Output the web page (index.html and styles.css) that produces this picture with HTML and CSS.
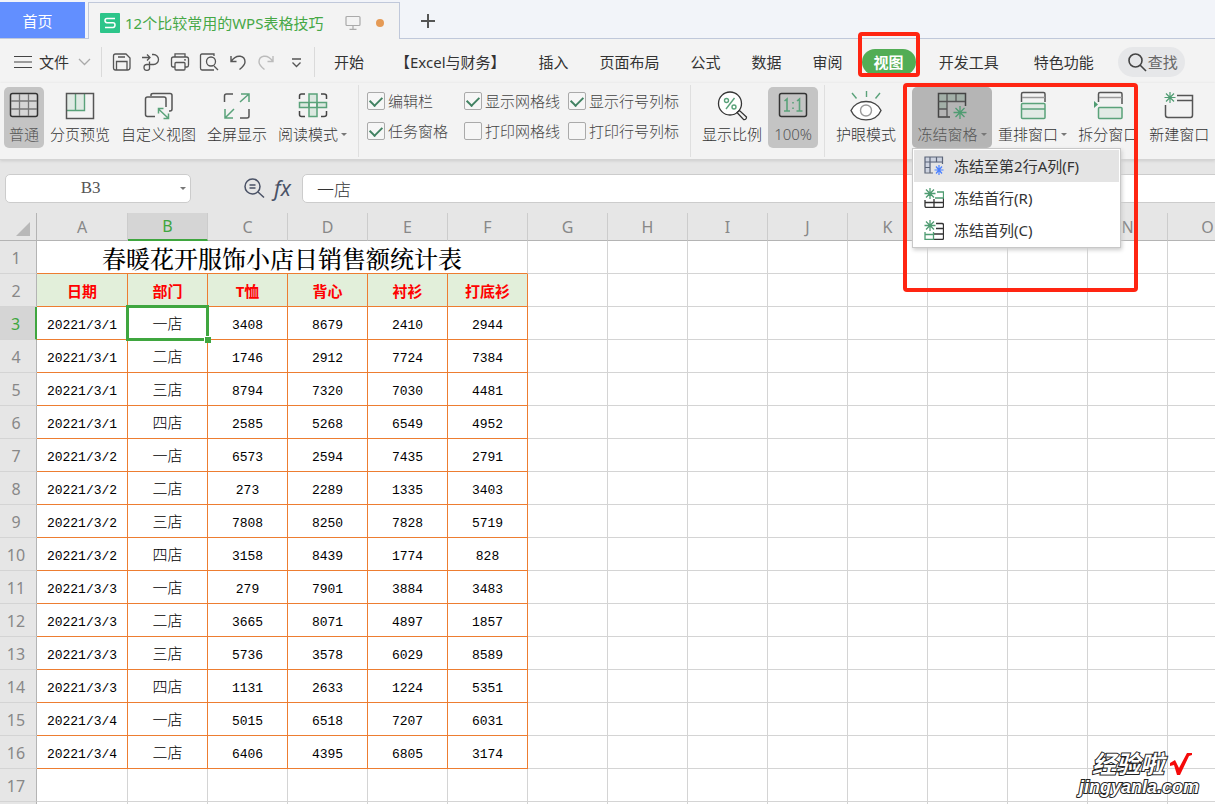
FILE: index.html
```html
<!DOCTYPE html>
<html lang="zh-CN">
<head>
<meta charset="utf-8">
<title>12个比较常用的WPS表格技巧</title>
<link rel="stylesheet" href="styles.css">
</head>
<body>
<div class="app">
  <header class="tabbar">
    <button class="home-tab">首页</button>
    <div class="doc-tab">
      <svg class="doc-logo" width="20" height="20" viewBox="0 0 20 20"><rect width="20" height="20" rx="1" fill="#2dc58a"/><path d="M15 5.5H7Q5 5.500 5 7.500T7 9.800H13Q15 9.800 15 12T13 14.500H5" fill="none" stroke="#fff" stroke-width="1.500"/></svg>
      <span class="doc-name">12个比较常用的WPS表格技巧</span>
      <svg width="16" height="16" viewBox="0 0 16 16" fill="none" stroke="#aaa" stroke-width="1.200"><rect x="1" y="1.500" width="14" height="9" rx="1"/><path d="M8 10.500V14M4.500 14.300H11.500"/></svg>
      <span class="unsaved"></span>
    </div>
    <button class="new-tab" aria-label="新建标签"><svg width="16" height="16" viewBox="0 0 16 16" stroke="#555" stroke-width="2"><path d="M8 1V15M1 8H15"/></svg></button>
  </header>

  <nav class="menubar">
    <button class="file-btn"><svg width="18" height="14" viewBox="0 0 18 14" stroke="#444" stroke-width="1.200"><path d="M0 1.500H18M0 7H18M0 12.500H18"/></svg>文件<svg width="13" height="8" viewBox="0 0 13 8" fill="none" stroke="#aaa" stroke-width="1.300"><path d="M1 1L6.500 6.500L12 1"/></svg></button>
    <span class="bar-rule"></span>
    <div class="quick">
      <button aria-label="保存"><svg width="20" height="20" viewBox="0 0 20 20" fill="none" stroke="#555" stroke-width="1.300"><path d="M3.500 2H14L18 6V15.500Q18 18 15.500 18H3.500Q1.500 18 1.500 16V4Q1.500 2 3.500 2Z"/><path d="M4.500 18V9.500H15V18M6 5H13"/></svg></button>
      <button aria-label="输出为PDF"><svg width="20" height="20" viewBox="0 0 20 20" fill="none" stroke="#555" stroke-width="1.300"><path d="M1 5.500H9M6 2.500L9 5.500L6 8.500M11 2.500H12.500A5 5 0 0 1 12.500 12.500H6Q3 12.500 3 15.500T6 18.300T8.500 15.500V9.500"/></svg></button>
      <button aria-label="打印"><svg width="20" height="20" viewBox="0 0 20 20" fill="none" stroke="#555" stroke-width="1.300"><path d="M5 5V1.800H15V5M5 15H3Q1.500 15 1.500 13V7Q1.500 5 3.500 5H16.500Q18.500 5 18.500 7V13Q18.500 15 17 15H15M14 7.800H16"/><rect x="5" y="10.500" width="10" height="7.500" rx="1"/></svg></button>
      <button aria-label="打印预览"><svg width="20" height="20" viewBox="0 0 20 20" fill="none" stroke="#555" stroke-width="1.300"><path d="M15 4V2H3Q1.500 2 1.500 3.500V16Q1.500 18 3 18H15M15 14L19 18"/><circle cx="12" cy="9.500" r="4.500"/></svg></button>
      <button aria-label="撤销"><svg width="20" height="20" viewBox="0 0 20 20" fill="none" stroke="#555" stroke-width="1.400"><path d="M3 4V9.500H8.500M3 9.500C9 1 17 4 17 10Q17 13 11.500 17.500"/></svg></button>
      <button aria-label="恢复"><svg width="20" height="20" viewBox="0 0 20 20" fill="none" stroke="#bbb" stroke-width="1.400"><path d="M16 4V9.500H10.500M16 9.500C10 1 2 4 2 10Q2 13 7.500 17.500"/></svg></button>
      <button aria-label="更多"><svg width="20" height="20" viewBox="0 0 20 20" fill="none" stroke="#555" stroke-width="1.300"><path d="M6 7H15M6.500 10.500L10.500 14.500L14.500 10.500"/></svg></button>
    </div>
    <span class="bar-rule"></span>
    <div class="menus">
      <button>开始</button>
      <button>【Excel与财务】</button>
      <button>插入</button>
      <button>页面布局</button>
      <button>公式</button>
      <button>数据</button>
      <button>审阅</button>
      <button class="active">视图</button>
      <button class="wide">开发工具</button>
      <button class="wide">特色功能</button>
    </div>
    <button class="search"><svg width="20" height="20" viewBox="0 0 20 20" fill="none" stroke="#444" stroke-width="1.600"><circle cx="8.500" cy="8.500" r="6.500"/><path d="M13 13L19 19"/></svg>查找</button>
  </nav>

  <section class="ribbon">
    <button class="tool on"><svg width="32" height="32" viewBox="0 0 32 32" fill="none"><rect x="2.500" y="4.500" width="27" height="23" rx="2" fill="#d6d6d6" stroke="#333" stroke-width="1.500"/><path d="M11.500 5V27M20.500 5V27M3 12H29M3 20H29" stroke="#777" stroke-width="1.300"/></svg>普通</button>
    <button class="tool"><svg width="32" height="32" viewBox="0 0 32 32" fill="none"><path d="M3 5H20V21H3Z" fill="#e0eae4"/><path d="M20.500 5V21.500H3M11.500 5V21" stroke="#5aa27a" stroke-width="1.400"/><rect x="2.500" y="4.500" width="27" height="25" stroke="#555" stroke-width="1.500"/></svg>分页预览</button>
    <button class="tool"><svg width="32" height="32" viewBox="0 0 32 32" fill="none" stroke="#555" stroke-width="1.500"><path d="M8 7V6Q8 4.500 10 4.500H27Q29 4.500 29 6.500V20Q29 22 27 22H26M12 27.500H4.500Q2.500 27.500 2.500 25.500V10Q2.500 8 4.500 8H21Q23 8 23 10V18"/><path d="M15.500 20L25.500 29.500M15.500 24.500V19.500H20.500M25.500 24.500V29.500H20.500" stroke="#5aa27a"/></svg>自定义视图</button>
    <button class="tool"><svg width="32" height="32" viewBox="0 0 32 32" fill="none" stroke="#555" stroke-width="1.500"><path d="M3.500 13V7Q3.500 5 5.500 5H12M28 20V27Q28 29 26 29H19"/><path d="M19 13L28 5M20 5H28V13M13 20L4 29M4 20V29H12" stroke="#5aa27a"/></svg>全屏显示</button>
    <button class="tool"><svg width="32" height="32" viewBox="0 0 32 32" fill="none" stroke="#444" stroke-width="1.500"><path d="M2.500 10V7Q2.500 5 4.500 5H8M24 5H27Q29.500 5 29.500 7V10M2.500 22V25.500Q2.500 27.500 4.500 27.500H8M24 27.500H27Q29.500 27.500 29.500 25.500V22"/><path d="M12 5V27.500H20V5ZM2.500 13.500H29.500V18.500H2.500Z" fill="#dbe8e0" stroke="#5aa27a"/><path d="M12 14V18M20 14V18" stroke="#5aa27a"/></svg><span class="with-arrow">阅读模式</span></button>
    <span class="group-rule"></span>
    <div class="checks">
      <label><input type="checkbox" checked>编辑栏</label>
      <label><input type="checkbox" checked>显示网格线</label>
      <label><input type="checkbox" checked>显示行号列标</label>
      <label><input type="checkbox" checked>任务窗格</label>
      <label><input type="checkbox">打印网格线</label>
      <label><input type="checkbox">打印行号列标</label>
    </div>
    <span class="group-rule"></span>
    <button class="tool"><svg width="32" height="32" viewBox="0 0 32 32" fill="none" stroke="#333" stroke-width="1.300"><circle cx="14" cy="14.500" r="11.500" fill="#fff"/><path d="M21 23.500L23.500 21.500L30.500 28Q30.500 31 27.500 30.500Z"/><g stroke="#5aa27a" stroke-width="1.400"><path d="M18.500 9L10 20"/><circle cx="10.500" cy="11.500" r="2"/><circle cx="18" cy="18" r="2"/></g></svg>显示比例</button>
    <button class="tool on ratio"><svg width="32" height="32" viewBox="0 0 32 32" fill="none"><rect x="2.500" y="4.500" width="27" height="23" rx="2" stroke="#333" stroke-width="1.500"/><path d="M7.500 12L10 10V22M7 22H13M20 12L22.500 10V22M19.500 22H25.500M16 13V14.500M16 18.500V20" stroke="#5aa27a" stroke-width="1.600"/></svg>100%</button>
    <span class="group-rule"></span>
    <button class="tool"><svg width="32" height="32" viewBox="0 0 32 32" fill="none" stroke="#444" stroke-width="1.400"><path d="M1 21.500C6 9.500 26 9.500 31 21.500C26 34 6 34 1 21.500Z" fill="#fff"/><circle cx="16" cy="21.500" r="5.500" stroke="#999"/><path d="M2 4L6.500 9.500M16.500 2V8M30 4L25.500 9.500" stroke="#5aa27a"/></svg>护眼模式</button>
    <span class="group-rule tight"></span>
    <div class="freeze">
      <button class="tool open"><svg width="32" height="32" viewBox="0 0 32 32" fill="none" stroke="#555" stroke-width="1.300"><path d="M3 5H29V12H11V20H3Z" fill="#a3b0a8" stroke="none"/><path d="M14 28H2.500V4.500H29.500V17" stroke="#444" stroke-width="1.500"/><path d="M11 5V28M20 5V12.500M2.500 12.500H29M2.500 20H11"/><path d="M24 17V30M17.500 23.500H30.500M19.500 19L28.500 28M28.500 19L19.500 28" stroke="#4f9c72"/></svg><span class="with-arrow">冻结窗格</span></button>
      <div class="dropdown" role="menu">
        <button class="hover" role="menuitem"><svg width="20" height="20" viewBox="0 0 20 20" fill="none" stroke="#5b6478" stroke-width="1.200"><path d="M1 1H18V7H7V16H1Z" fill="#cdd3e0" stroke="none"/><path d="M9 17H1V1H18.500V8M6 1V17M12.500 1V6M1 6H18M1 11.500H6"/><path d="M15 9V19M10.500 14H19.500M12 10.500L18 17.500M18 10.500L12 17.500" stroke="#4a80ff"/></svg>冻结至第2行A列(F)</button>
        <button role="menuitem"><svg width="20" height="20" viewBox="0 0 20 20" fill="none" stroke="#333" stroke-width="1.300"><path d="M1 12V18Q1 19.500 2.500 19.500H17.500Q19.500 19.500 19.500 18V10M1 14.500H19M10 11V19"/><path d="M6 0V11M.5 5.500H11.500M2 1.500L10 9.500M10 1.500L2 9.500M13 4H19.500V10H11" stroke="#4f9c72"/></svg>冻结首行(R)</button>
        <button role="menuitem"><svg width="20" height="20" viewBox="0 0 20 20" fill="none" stroke="#333" stroke-width="1.300"><path d="M12 3.500H18Q19.500 3.500 19.500 5V18Q19.500 19.500 18 19.500H10M12 8.500H19M10 14H19"/><path d="M6 0V11M.5 5.500H11.500M2 1.500L10 9.500M10 1.500L2 9.500M1 12V19.500H9.500V12M1 14.500H9.500" stroke="#4f9c72"/></svg>冻结首列(C)</button>
      </div>
    </div>
    <button class="tool"><svg width="32" height="32" viewBox="0 0 32 32" fill="none" stroke="#555" stroke-width="1.500"><path d="M4.500 13V5Q4.500 3.500 6 3.500H26.500Q28 3.500 28 5V13"/><path d="M5 8.500H28" stroke="#999"/><rect x="4.500" y="14.500" width="23.500" height="15" rx="1" fill="#e2ebe5" stroke="#5aa27a"/><path d="M5 20H28" stroke="#5aa27a"/></svg><span class="with-arrow">重排窗口</span></button>
    <button class="tool"><svg width="32" height="32" viewBox="0 0 32 32" fill="none" stroke="#555" stroke-width="1.500"><path d="M6.500 13V5Q6.500 3.500 8 3.500H28.500Q30 3.500 30 5V15"/><path d="M7 8.500H30" stroke="#999"/><rect x="6.500" y="18.500" width="23.500" height="11" rx="1" fill="#e2ebe5" stroke="#5aa27a"/><path d="M2 12V19L6 15.500Z" fill="#4f9c72" stroke="none"/></svg>拆分窗口</button>
    <button class="tool"><svg width="32" height="32" viewBox="0 0 32 32" fill="none" stroke="#555" stroke-width="1.500"><path d="M14 6.500H29.500V26Q29.500 28.500 27.500 28.500H5Q2.500 28.500 2.500 26V16M14 11.500H29"/><path d="M7 3V14M1.500 8.500H12.500M3 4.500L11 12.500M11 4.500L3 12.500" stroke="#4f9c72" stroke-width="1.200"/></svg>新建窗口</button>
    <span class="callout callout-tools"></span>
  </section>

  <section class="formula-bar">
    <div class="name-box"><input aria-label="名称框" value="B3"><button aria-label="展开名称"></button></div>
    <div class="fx-tools">
      <button aria-label="查找函数"><svg width="22" height="22" viewBox="0 0 22 22" fill="none" stroke="#4a5266" stroke-width="1.500"><circle cx="9.500" cy="9.500" r="7.500"/><path d="M15 15L21 20.500M6.500 8H12.500M6.500 11H12.500"/></svg></button>
      <button class="fx" aria-label="插入函数">fx</button>
    </div>
    <input class="formula" aria-label="编辑栏" value="一店">
  </section>

  <main class="sheet"><table id="grid"></table></main>

  <div class="watermark"><div class="mark-top">经验啦<svg width="26" height="26" viewBox="0 0 26 26"><path d="M2 12L7 9L11 17L19 2H24V4L21 5L12 24H9L6 14L2 15Z" fill="#f50a0a"/></svg></div><div class="mark-site">jingyanla.com</div></div>
</div>
<script src="grid.js"></script>
</body>
</html>
```
FILE: styles.css
```css
* { box-sizing: border-box; }
body {
  margin: 0;
  font-family: "Noto Sans", "Noto Sans CJK SC", sans-serif;
  font-weight: 300;
  font-size: 15px;
  line-height: 20px;
  color: #333;
  background: #fff;
}
button, input { font: inherit; color: inherit; }
button { border: 0; padding: 0; background: none; white-space: nowrap; }
svg { display: block; flex: none; }
.app { position: relative; height: 100vh; overflow: hidden; display: flex; flex-direction: column; }

.tabbar { flex: none; display: flex; height: 39px; padding-top: 2px; background: #f2f4f9; border-bottom: 1px solid #c0c8da; font-weight: 400; }
.home-tab { width: 85px; padding: 2px 10px 0 0; background: #628fff; color: #fff; }
.doc-tab {
  display: flex; align-items: center; width: 312px; margin: 0 0 -1px 3px; padding: 3px 11px 0;
  background: #f3f3f3; border: 1px solid #c0c8da; border-bottom: 0; color: #46a846;
}
.doc-name { flex: 1; min-width: 0; margin-left: 5px; white-space: nowrap; }
.unsaved { width: 8px; height: 8px; margin: 0 4px 0 15px; border-radius: 50%; background: #e59a55; }
.new-tab { margin-left: 20px; padding-top: 2px; }

.menubar { flex: none; display: flex; align-items: center; height: 44px; padding: 2px 0 0 14px; background: #f3f3f3; font-weight: 400; }
.file-btn { display: flex; align-items: center; gap: 7px; width: 87px; }
.bar-rule { width: 1px; height: 30px; background: #dadada; }
.file-btn svg:last-child { margin-left: 2px; }
.quick { display: flex; gap: 9px; width: 212px; padding-left: 10px; }
.menus { display: flex; align-items: center; gap: 7px; padding-left: 7px; }
.menus button { padding: 3px 12px; }
.menus button:nth-child(2) { margin-right: 2px; }
.menus .active { position: relative; background: #52ad55; color: #fff; font-weight: 700; border-radius: 14px; }
.menus .active::after { content: ""; position: absolute; inset: -17px -4px -2px; border: 4px solid #ff2512; border-radius: 4px; }
.menus .wide { margin-left: 4px; }
.search { display: flex; align-items: center; gap: 1px; margin-left: 12px; height: 30px; padding: 0 7px 0 9px; border-radius: 15px; background: #e6e7e9; color: #666; }

.ribbon { flex: none; position: relative; z-index: 2; display: flex; gap: 1px; height: 77px; padding: 4px 0 0 4px; background: #f3f3f3; border-bottom: 1px solid #d4d4d4; box-shadow: 0 1px 3px #ccc; }
.tool { flex: none; display: flex; flex-direction: column; align-items: center; gap: 3px; height: 61px; padding: 2px 5px 0; border-radius: 5px; color: #333; }
.tool svg { margin: 0 -1px; }
.tool.on { background: #c4c4c4; color: #555; }
.tool.open { width: 80px; background: #b5b5b5; color: #555; }
.tool.ratio { width: 50px; }
.with-arrow { display: flex; align-items: center; gap: 3px; }
.with-arrow::after, .name-box button::after { content: ""; border: 3px solid transparent; border-top-color: #777; border-bottom: 0; }
.group-rule { flex: none; width: 1px; height: 72px; margin: -2px 5px 0; background: #dfdfdf; }
.group-rule.tight { margin: -2px 4px 0; }
.checks { flex: none; display: grid; grid-template-columns: 97px 104px 114px; grid-auto-rows: 20px; row-gap: 10px; padding: 4px 0 0 2px; width: 319px; color: #444; }
.checks label { display: flex; align-items: center; gap: 3px; white-space: nowrap; }
.checks input { appearance: none; width: 18px; height: 18px; margin: 0; border: 1px solid #aaa; border-radius: 2px; background: #f6f6f6; display: grid; place-items: center; }
.checks input:checked::after { content: ""; width: 10px; height: 6px; margin-top: -3px; border: solid #418262; border-width: 0 0 2px 2px; transform: rotate(-45deg); }
.freeze { position: relative; flex: none; }
.dropdown { position: absolute; top: 61px; left: 0; width: 209px; padding: 1px; background: #fff; border: 1px solid #c8c8c8; box-shadow: 1px 2px 4px #ccc; font-weight: 400; }
.dropdown button { display: flex; align-items: center; gap: 10px; width: 100%; height: 32px; padding-left: 10px; }
.dropdown .hover { background: #e4e4e4; }
.callout { position: absolute; border: 4px solid #ff2512; border-radius: 4px; pointer-events: none; }
.callout-tools { left: 903px; top: 0; width: 235px; height: 209px; }

.formula-bar { flex: none; display: flex; align-items: center; height: 53px; padding: 3px 0 0 5px; background: #e6e6e6; }
.name-box { display: flex; width: 186px; height: 29px; border: 1px solid #ccc; border-radius: 5px; background: #fff; }
.name-box input { width: 100%; min-width: 0; padding: 0; border: 0; background: none; text-align: center; font-family: "Liberation Serif", serif; font-size: 17px; font-weight: 400; color: #555; }
.name-box button { width: 16px; display: grid; place-items: center; }
.fx-tools { display: flex; align-items: center; gap: 9px; width: 111px; padding-left: 52px; }
.fx { font-family: "Noto Sans", sans-serif; font-style: italic; font-size: 21px; color: #4a5266; font-weight: 400; }
.formula { flex: 1; min-width: 0; height: 29px; margin-right: -8px; padding: 0 14px; border: 1px solid #ccc; border-radius: 5px; background: #fff; font-size: 17px; }

.sheet { flex: 1; min-height: 0; overflow: hidden; background: #fff; }
table { table-layout: fixed; width: 1248px; border-collapse: separate; border-spacing: 0; }
th, td { height: 33px; padding: 0; border: solid #d4d4d4; border-width: 0 1px 1px 0; text-align: center; font-weight: 400; white-space: nowrap; line-height: 20px; }
col { width: 80px; }
.col-head { width: 37px; }
.col-date { width: 91px; }
thead th { height: 28px; background: #e6e6e6; border-color: #b4b4b4; color: #888; font-size: 16px; }
thead th:not(:first-child) { border-right-color: #ccc; }
thead .current { background: #d5d5d5; color: #3fa63f; border-bottom: 2px solid #3fa63f; }
.corner svg { margin: 4px 0 0 16px; }
tbody th { padding: 2px 4px 0 0; background: #e6e6e6; border-right-color: #b4b4b4; color: #888; font-size: 16px; }
tbody .current th { background: #d5d5d5; color: #3fa63f; border-right: 2px solid #3fa63f; }
.title { padding-top: 2px; border-bottom-color: #ed7d31; font-family: "Noto Serif CJK SC", "Noto Sans CJK SC", serif; font-weight: 500; font-size: 24px; line-height: 30px; color: #000; }
.label { padding-top: 2px; background: #e2efda; border-color: #ed7d31; color: #f00; font-weight: 700; }
.value { border-color: #ed7d31; padding-top: 5px; color: #000; font-family: "Liberation Mono", "Noto Sans CJK SC", monospace; font-size: 13px; }
.shop { font-size: 15px; font-weight: 300; }
.selected { position: relative; }
.selected::before { content: ""; position: absolute; inset: -2px; border: 3px solid #3fa63f; }
.selected::after { content: ""; position: absolute; right: -4px; bottom: -4px; width: 6px; height: 6px; background: #3fa63f; border: solid #fff; border-width: 1px 0 0 1px; }

.watermark { position: absolute; right: 16px; bottom: 7px; color: #fff; font-style: italic; font-weight: 700; -webkit-text-stroke: 2px #222; paint-order: stroke fill; }
.mark-top { display: flex; align-items: center; justify-content: flex-end; gap: 4px; padding-right: 5px; font-size: 24px; line-height: 24px; }
.mark-site { font-family: "Liberation Sans", sans-serif; font-size: 18px; line-height: 20px; }
```
FILE: grid.js
```js
const columns = "ABCDEFGHIJKLMNO".split("");
const labels = ["日期", "部门", "T恤", "背心", "衬衫", "打底衫"];
const sales = [
  ["20221/3/1", "一店", 3408, 8679, 2410, 2944],
  ["20221/3/1", "二店", 1746, 2912, 7724, 7384],
  ["20221/3/1", "三店", 8794, 7320, 7030, 4481],
  ["20221/3/1", "四店", 2585, 5268, 6549, 4952],
  ["20221/3/2", "一店", 6573, 2594, 7435, 2791],
  ["20221/3/2", "二店", 273, 2289, 1335, 3403],
  ["20221/3/2", "三店", 7808, 8250, 7828, 5719],
  ["20221/3/2", "四店", 3158, 8439, 1774, 828],
  ["20221/3/3", "一店", 279, 7901, 3884, 3483],
  ["20221/3/3", "二店", 3665, 8071, 4897, 1857],
  ["20221/3/3", "三店", 5736, 3578, 6029, 8589],
  ["20221/3/3", "四店", 1131, 2633, 1224, 5351],
  ["20221/3/4", "一店", 5015, 6518, 7207, 6031],
  ["20221/3/4", "二店", 6406, 4395, 6805, 3174]
];
const blanks = n => "<td></td>".repeat(n);

let html = '<colgroup><col class="col-head"><col class="col-date">' + "<col>".repeat(14) + "</colgroup>";
html += '<thead><tr><th class="corner"><svg width="14" height="14"><path d="M14 0V14H0Z" fill="#b8b8b8"/></svg></th>';
html += columns.map(c => `<th${c === "B" ? ' class="current"' : ""}>${c}</th>`).join("") + "</tr></thead><tbody>";
html += `<tr><th>1</th><td class="title" colspan="6">春暖花开服饰小店日销售额统计表</td>${blanks(9)}</tr>`;
html += "<tr><th>2</th>" + labels.map(l => `<td class="label">${l}</td>`).join("") + blanks(9) + "</tr>";
sales.forEach((row, r) => {
  html += `<tr${r === 0 ? ' class="current"' : ""}><th>${r + 3}</th>`;
  html += row.map((v, c) => `<td class="value${c === 1 ? " shop" : ""}${r === 0 && c === 1 ? " selected" : ""}">${v}</td>`).join("");
  html += blanks(9) + "</tr>";
});
html += `<tr><th>17</th>${blanks(15)}</tr><tr><th></th>${blanks(15)}</tr></tbody>`;
document.getElementById("grid").innerHTML = html;
```
